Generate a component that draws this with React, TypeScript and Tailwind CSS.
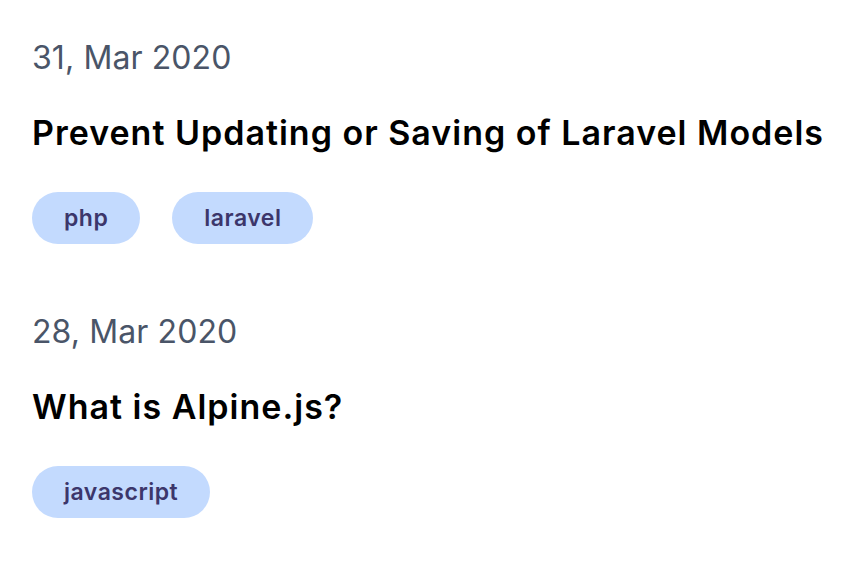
import React from "react";

const posts = [
  { date: "31, Mar 2020", title: "Prevent Updating or Saving of Laravel Models", tags: ["php", "laravel"] },
  { date: "28, Mar 2020", title: "What is Alpine.js?", tags: ["javascript"] },
];

export default function App() {
  return (
    <div
      className="min-h-screen bg-white pl-8 pt-[38px]"
      style={{ fontFamily: "Inter, 'Noto Sans', sans-serif" }}
    >
      {posts.map((p, i) => (
        <div key={i} className={i > 0 ? "mt-[68px]" : ""}>
          <div className="text-[32px] leading-[40px] tracking-[0.1px] text-[#4a5568]">{p.date}</div>
          <h2 className="mt-[35px] text-[34px] leading-[40px] tracking-[1px] font-semibold text-black">{p.title}</h2>
          <div className="mt-[39px] flex gap-8">
            {p.tags.map((t) => (
              <span
                key={t}
                className="flex h-[52px] items-center rounded-full bg-[#c3dafe] px-8 text-[23px] tracking-[0.5px] font-semibold text-[#3c366b]"
              >
                {t}
              </span>
            ))}
          </div>
        </div>
      ))}
    </div>
  );
}
